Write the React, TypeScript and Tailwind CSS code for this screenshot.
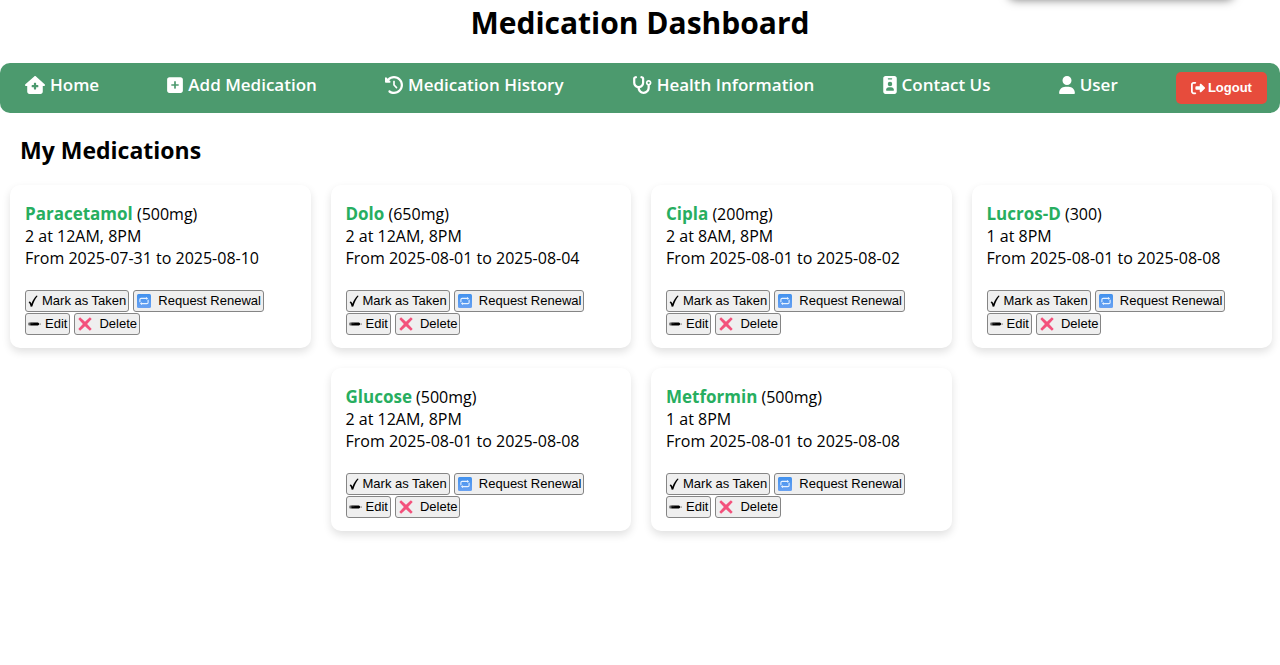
import type { ReactNode } from "react";
import {
  FaClockRotateLeft,
  FaHouseMedical,
  FaIdBadge,
  FaRightFromBracket,
  FaSquarePlus,
  FaStethoscope,
  FaUser,
} from "react-icons/fa6";

type Medication = { name: string; dose: string; schedule: string; from: string; to: string };

const medications: Medication[] = [
  { name: "Paracetamol", dose: "500mg", schedule: "2 at 12AM, 8PM", from: "2025-07-31", to: "2025-08-10" },
  { name: "Dolo", dose: "650mg", schedule: "2 at 12AM, 8PM", from: "2025-08-01", to: "2025-08-04" },
  { name: "Cipla", dose: "200mg", schedule: "2 at 8AM, 8PM", from: "2025-08-01", to: "2025-08-02" },
  { name: "Lucros-D", dose: "300", schedule: "1 at 8PM", from: "2025-08-01", to: "2025-08-08" },
  { name: "Glucose", dose: "500mg", schedule: "2 at 12AM, 8PM", from: "2025-08-01", to: "2025-08-08" },
  { name: "Metformin", dose: "500mg", schedule: "1 at 8PM", from: "2025-08-01", to: "2025-08-08" },
];

const links = [
  { label: "Home", Icon: FaHouseMedical, width: "w-5" },
  { label: "Add Medication", Icon: FaSquarePlus, width: "w-4" },
  { label: "Medication History", Icon: FaClockRotateLeft, width: "w-[18px]" },
  { label: "Health Information", Icon: FaStethoscope, width: "w-5" },
  { label: "Contact Us", Icon: FaIdBadge, width: "w-3.5" },
  { label: "User", Icon: FaUser, width: "w-4" },
];

function CheckIcon() {
  return (
    <svg viewBox="0 0 10 14" className="h-3.5 w-2.5" aria-hidden="true">
      <path d="M0.6 8.2 C1.6 7 2.5 7.4 3.4 9.8 C4.9 6 6.6 3.5 8.7 1.6 L9.6 2 C7.2 5 5.6 8.3 4.3 12.4 L2.7 12.8 C2.2 10.7 1.6 9.1 0.6 8.2Z" fill="#000" />
    </svg>
  );
}

function RepeatIcon() {
  return (
    <svg viewBox="0 0 14 14" className="size-3.5" aria-hidden="true">
      <defs>
        <linearGradient id="tile" x1="0" y1="0" x2="0" y2="1">
          <stop offset="0" stopColor="#4191ee" />
          <stop offset="1" stopColor="#6aa2f2" />
        </linearGradient>
      </defs>
      <rect width="14" height="14" rx="1.5" fill="url(#tile)" />
      <path d="M2.9 8.3V5.6Q2.9 4.4 4.1 4.4H10M11.1 5.7V8.4Q11.1 9.6 9.9 9.6H4" fill="none" stroke="#e8f2ff" strokeWidth="1.1" />
      <path d="M9 3 11.2 4.4 9 5.8ZM5 8.2 2.8 9.6 5 11Z" fill="#e8f2ff" />
    </svg>
  );
}

function PencilIcon() {
  return (
    <svg viewBox="0 0 13 14" className="h-3.5 w-[13px]" aria-hidden="true">
      <path d="M0.8 5.6H1.6V8.4H0.8Q0.2 7 0.8 5.6ZM2.2 5.4H10L11.2 6.6V7.4L10 8.6H2.2Z" fill="#000" />
      <path d="M2.6 6H5.4" stroke="#777" strokeWidth="0.5" />
      <circle cx="12.2" cy="7" r="0.5" fill="#222" />
    </svg>
  );
}

function CrossIcon() {
  return (
    <svg viewBox="0 0 14 14" className="size-3.5" aria-hidden="true">
      <path d="M2.1 0.3 7 4.8 11.9 0.3 13.7 2.1 9.1 7 13.7 11.9 11.9 13.7 7 9.2 2.1 13.7 0.3 11.9 4.9 7 0.3 2.1Z" fill="#f3527c" />
    </svg>
  );
}

function ActionButton({ icon, wide, children }: { icon: ReactNode; wide?: boolean; children: ReactNode }) {
  return (
    <button
      type="button"
      className={`flex h-[22px] items-center rounded-[3px] border border-[#858585] bg-[#efefef] font-['Liberation_Sans',Arial,sans-serif] text-[13px] whitespace-nowrap text-black hover:bg-[#e5e5e5] ${
        wide ? "gap-[7px] pr-0.5 pl-[3px]" : "gap-1 px-0.5"
      }`}
    >
      {icon}
      {children}
    </button>
  );
}

function MedicationCard({ med }: { med: Medication }) {
  return (
    <li className="min-w-[290px] basis-[calc((100%-60px)/4)] rounded-[10px] bg-white px-[15px] pt-[18px] pb-[13px] shadow-[0_4px_8px_rgba(0,0,0,0.12)]">
      <div className="text-[16px] leading-[22px]">
        <p>
          <strong className="text-[17px] font-bold text-[#27ae60]">{med.name}</strong> ({med.dose})
        </p>
        <p>{med.schedule}</p>
        <p>
          From {med.from} to {med.to}
        </p>
      </div>
      <div className="mt-[21px] flex flex-wrap gap-x-1 gap-y-px">
        <ActionButton icon={<CheckIcon />}>Mark as Taken</ActionButton>
        <ActionButton icon={<RepeatIcon />} wide>Request Renewal</ActionButton>
        <ActionButton icon={<PencilIcon />}>Edit</ActionButton>
        <ActionButton icon={<CrossIcon />} wide>Delete</ActionButton>
      </div>
    </li>
  );
}

export default function App() {
  return (
    <div className="relative min-h-screen bg-white font-['Open_Sans','Noto_Sans',sans-serif] text-black">
      <div aria-hidden="true" className="absolute right-[46px] bottom-full h-10 w-[226px] rounded-lg shadow-[0_0_10px_rgba(0,0,0,0.5)]" />
      <header>
        <h1 className="pt-px pb-[18px] text-center text-[30px] leading-[44px] font-bold">Medication Dashboard</h1>
        <nav aria-label="Main" className="flex min-h-[50px] flex-wrap items-center justify-between rounded-[10px] bg-[#4c9a6e] pr-[13px] pl-[15px] text-white">
          {links.map(({ label, Icon, width }) => (
            <a key={label} href="#" className="mb-1.5 flex items-center gap-[5px] px-2.5 text-[17px] leading-6 font-semibold whitespace-nowrap">
              <Icon className={`h-[18px] ${width}`} aria-hidden="true" />
              {label}
            </a>
          ))}
          <button type="button" className="flex h-8 items-center gap-[3px] rounded-[5px] bg-[#e74c3c] px-[15px] font-['Liberation_Sans',Arial,sans-serif] text-[13px] font-bold">
            <FaRightFromBracket className="size-3.5" aria-hidden="true" />
            Logout
          </button>
        </nav>
      </header>
      <main>
        <h2 className="px-5 pt-[21px] pb-[19px] text-[23px] leading-8 font-bold">My Medications</h2>
        <ul className="flex flex-wrap justify-center gap-5 pr-2 pb-5 pl-2.5">
          {medications.map((med) => (
            <MedicationCard key={med.name} med={med} />
          ))}
        </ul>
      </main>
    </div>
  );
}
